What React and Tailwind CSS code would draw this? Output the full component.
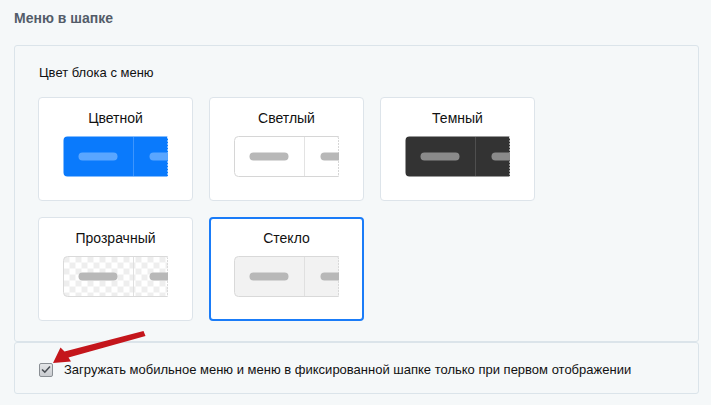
import React from "react";

function zig(x0, h) {
  let d = "";
  let y = 0;
  let out = true;
  while (y < h) {
    y = Math.min(h, y + 1.5);
    d += ` L${out ? x0 - 1.5 : x0},${y}`;
    out = !out;
  }
  return d;
}

function Preview({ bg, stroke, pill, divider, checker, id }) {
  const W = 105, H = 40, R = 4;
  const edge = zig(W, H);
  const d = `M${R},0 L${W - 1},0 ${edge} L${R},${H} Q0,${H} 0,${H - R} L0,${R} Q0,0 ${R},0 Z`;
  return (
    <svg width={W + 1} height={H + 1} viewBox={`-0.5 -0.5 ${W + 1} ${H + 1}`} className="block">
      {checker && (
        <defs>
          <pattern id={id} width="12" height="12" patternUnits="userSpaceOnUse">
            <rect width="12" height="12" fill="#ffffff" />
            <rect width="6" height="6" fill="#eeeeee" />
            <rect x="6" y="6" width="6" height="6" fill="#eeeeee" />
          </pattern>
        </defs>
      )}
      <path d={d} fill={checker ? `url(#${id})` : bg} stroke={stroke || "none"} strokeWidth="1" />
      <line x1="70" y1="0.5" x2="70" y2={H - 0.5} stroke={divider} strokeWidth="1" />
      <rect x="15" y="16" width="39" height="8" rx="4" fill={pill} />
      <rect x="86" y="16" width="30" height="8" rx="4" fill={pill} />
    </svg>
  );
}

function Card({ title, selected, children }) {
  return (
    <div
      className={
        "w-[155px] h-[104px] bg-white rounded-[4px] flex flex-col items-center pt-[10px] " +
        (selected ? "border-2 border-[#1a7cf8]" : "border border-[#dde4ea]")
      }
    >
      <div className={"text-[14px] leading-[20px] text-[#111] " + (selected ? "-mt-[1px]" : "")}>{title}</div>
      <div className="mt-[8px] overflow-hidden w-[105px]">{children}</div>
    </div>
  );
}

export default function App() {
  return (
    <div
      className="relative w-[711px] h-[405px] bg-[#f5f8f9] overflow-hidden"
      style={{ fontFamily: '"Liberation Sans", Arial, sans-serif' }}
    >
      <div className="pl-[14px] pt-[9px] h-[45px] text-[14px] leading-[18px] font-bold text-[#535c69]">
        Меню в шапке
      </div>
      <div className="ml-[14px] w-[685px] border border-[#dbe4ea] rounded-[3px] pl-[23px] pt-[19px] pb-[20px]">
        <div className="text-[13px] leading-[16px] text-[#111] mb-[16px] pl-[1px]">Цвет блока с меню</div>
        <div className="flex flex-col gap-[16px]">
          <div className="flex gap-[16px]">
            <Card title="Цветной">
              <Preview bg="#0a7afc" pill="#5aa6ff" divider="#3d95fd" />
            </Card>
            <Card title="Светлый">
              <Preview bg="#ffffff" stroke="#d6d6d6" pill="#b8b8b8" divider="#e3e3e3" />
            </Card>
            <Card title="Темный">
              <Preview bg="#333333" pill="#8a8a8a" divider="#4f4f4f" />
            </Card>
          </div>
          <div className="flex gap-[16px]">
            <Card title="Прозрачный">
              <Preview checker id="chk" stroke="#dadada" pill="#b8b8b8" divider="#e0e0e0" />
            </Card>
            <Card title="Стекло" selected>
              <Preview bg="#f2f2f2" stroke="#d9d9d9" pill="#b8b8b8" divider="#e0e0e0" />
            </Card>
          </div>
        </div>
      </div>
      <div className="ml-[14px] w-[685px] h-[52px] border border-[#dbe4ea] rounded-[3px] pl-[24px] flex items-center gap-[11px]">
        <div className="w-[14px] h-[14px] mt-[3px] rounded-[2px] border border-[#8a8f94] bg-gradient-to-b from-[#e4e6e8] to-[#c9ccd0] flex items-center justify-center">
          <svg width="10" height="9" viewBox="0 0 10 9">
            <path d="M1 4.5 L3.8 7.2 L9 1.5" fill="none" stroke="#4a4f55" strokeWidth="1.6" />
          </svg>
        </div>
        <div className="text-[13px] leading-[16px] text-[#111] mt-[3px]">
          Загружать мобильное меню и меню в фиксированной шапке только при первом отображении
        </div>
      </div>
      <svg className="absolute left-0 top-0 pointer-events-none" width="711" height="405">
        <path
          d="M53,363 L60.5,347.5 L64.5,351.5 L143.5,331 L145.5,336 L68.5,357.5 L71,361.5 Z"
          fill="#c4161c"
        />
      </svg>
    </div>
  );
}
